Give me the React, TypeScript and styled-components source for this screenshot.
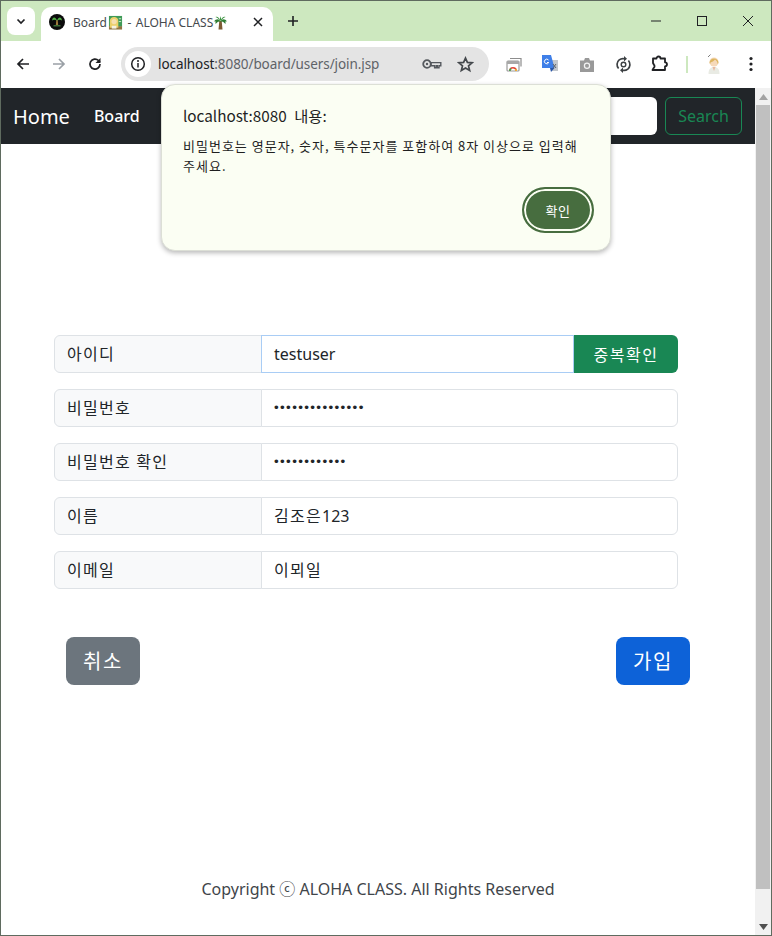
import React from "react";
import styled, { createGlobalStyle } from "styled-components";

const KR = `"Noto Sans", "Noto Sans CJK KR", sans-serif`;

const Global = createGlobalStyle`
  html, body { margin: 0; padding: 0; background: #fff; }
  * { box-sizing: border-box; }
  body { font-family: ${KR}; overflow: hidden; }
`;

const Win = styled.div`
  position: relative;
  width: 772px;
  height: 936px;
  display: flex;
  flex-direction: column;
  border: 1px solid #5f6b5f;
  overflow: hidden;
  background: #fff;
`;

/* tab strip */
const TabStrip = styled.div`
  height: 40px;
  flex: none;
  display: flex;
  align-items: flex-start;
  background: #cde8bf;
  padding: 6px 0 0 6px;
`;
const TabMenu = styled.div`
  width: 28px;
  height: 28px;
  border-radius: 8px;
  background: #fff;
  display: flex;
  align-items: center;
  justify-content: center;
  margin-right: 6px;
`;
const Tab = styled.div`
  width: 232px;
  height: 34px;
  background: #fff;
  border-radius: 10px 10px 0 0;
  display: flex;
  align-items: center;
  padding: 0 9px 4px 8px;
`;
const TabTitle = styled.span`
  display: flex;
  align-items: center;
  flex: 1;
  margin-left: 8px;
  font-family: "Noto Sans", sans-serif;
  font-size: 12px;
  color: #45494d;
  white-space: nowrap;
`;
const Dash = styled.span`
  margin: 0 4.5px;
`;
const NewTab = styled.div`
  width: 28px;
  height: 28px;
  margin-left: 6px;
  display: flex;
  align-items: center;
  justify-content: center;
`;
const WinControls = styled.div`
  margin: -6px 0 0 auto;
  display: flex;
  height: 40px;
  align-items: center;
`;
const WinBtn = styled.div`
  width: 46px;
  height: 40px;
  display: flex;
  align-items: center;
  justify-content: center;
`;

/* toolbar */
const Toolbar = styled.div`
  height: 47px;
  flex: none;
  display: flex;
  align-items: center;
  background: #fff;
  border-radius: 10px 10px 0 0;
  padding: 0 0 1px 4px;
`;
const NavBtn = styled.div`
  width: 36px;
  height: 34px;
  display: flex;
  align-items: center;
  justify-content: center;
`;
const Omnibox = styled.div`
  width: 368px;
  height: 34px;
  margin-left: 8px;
  border-radius: 17px;
  background: #e4e4e4;
  display: flex;
  align-items: center;
  padding: 0 14px 0 4px;
`;
const SiteInfo = styled.div`
  width: 26px;
  height: 26px;
  border-radius: 50%;
  background: #fff;
  display: flex;
  align-items: center;
  justify-content: center;
`;
const Url = styled.div`
  flex: 1;
  margin-left: 7px;
  font-family: "Noto Sans", sans-serif;
  font-size: 13.5px;
  color: #5f6368;
  letter-spacing: -0.08px;
  white-space: nowrap;
`;
const Host = styled.span`
  color: #202124;
`;
const OmniIcon = styled.div`
  width: 20px;
  height: 20px;
  margin-left: 13px;
  display: flex;
  align-items: center;
  justify-content: center;
`;
const Extensions = styled.div`
  display: flex;
  align-items: center;
  margin-left: 7px;
`;
const ExtIcon = styled.div`
  width: 36.4px;
  height: 24px;
  display: flex;
  align-items: center;
  justify-content: center;
`;
const ExtSep = styled.div`
  width: 2px;
  height: 17px;
  background: #cde8bf;
  margin: 0 8px 0 8px;
`;

/* viewport */
const Viewport = styled.div`
  flex: 1;
  display: flex;
  min-height: 0;
`;
const Page = styled.div`
  flex: 1;
  display: flex;
  flex-direction: column;
`;
const Navbar = styled.nav`
  height: 56px;
  flex: none;
  display: flex;
  align-items: center;
  background: #212529;
  padding: 0 13px 0 12px;
`;
const Brand = styled.span`
  color: #fff;
  font-size: 20px;
  margin-right: 24px;
`;
const NavLink = styled.span`
  color: #fff;
  font-size: 16px;
  font-weight: 500;
`;
const SearchBox = styled.div`
  margin-left: auto;
  width: 120px;
  height: 38px;
  background: #fff;
  border-radius: 6px;
`;
const SearchBtn = styled.div`
  width: 77px;
  height: 38px;
  margin-left: 8px;
  border: 1px solid #198754;
  border-radius: 6px;
  color: #198754;
  font-size: 16px;
  display: flex;
  align-items: center;
  justify-content: center;
`;
const Main = styled.main`
  flex: 1;
  display: flex;
  flex-direction: column;
  padding: 191px 0 0 53px;
`;
const Form = styled.form`
  width: 624px;
  display: flex;
  flex-direction: column;
  gap: 16px;
`;
const Group = styled.div`
  display: flex;
  height: 38px;
`;
const Label = styled.span`
  width: 208px;
  flex: none;
  padding: 0 0 2px 12px;
  display: flex;
  align-items: center;
  font-size: 16px;
  letter-spacing: 1.25px;
  color: #212529;
  background: #f8f9fa;
  border: 1px solid #dee2e6;
  border-radius: 6px 0 0 6px;
`;
const Field = styled.div<{ $focus?: boolean; $joined?: boolean; $lift?: boolean }>`
  flex: 1;
  margin-left: -1px;
  padding: 0 0 ${(p) => (p.$lift ? "2px" : "1px")} 12px;
  display: flex;
  align-items: center;
  font-size: 16px;
  color: #212529;
  background: #fff;
  border: 1px solid ${(p) => (p.$focus ? "#a9cdf5" : "#dee2e6")};
  border-radius: ${(p) => (p.$joined ? "0" : "0 6px 6px 0")};
`;
const Hangul = styled.span`
  letter-spacing: 1.3px;
`;
const Dots = styled.span`
  font-family: "Liberation Sans", sans-serif;
  font-size: 13.4px;
  letter-spacing: 1.36px;
`;
const CheckBtn = styled.button`
  width: 104px;
  flex: none;
  border: 0;
  padding: 0;
  font-family: ${KR};
  font-size: 16px;
  letter-spacing: 1.5px;
  color: #fff;
  background: #198754;
  border-radius: 0 6px 6px 0;
`;
const Actions = styled.div`
  width: 624px;
  margin: 48px 0 0 12px;
  display: flex;
  justify-content: space-between;
`;
const LgButton = styled.button<{ $color: string }>`
  height: 48px;
  width: 74px;
  border: 0;
  padding: 0 0 2px;
  font-family: ${KR};
  font-size: 20px;
  letter-spacing: 1.5px;
  color: #fff;
  background: ${(p) => p.$color};
  border-radius: 8px;
`;
const Footer = styled.footer`
  margin: 192px 0 0 -53px;
  text-align: center;
  font-size: 16px;
  line-height: 24px;
  color: #3f454a;
`;

/* scrollbar */
const Scrollbar = styled.div`
  width: 16px;
  flex: none;
  background: #f1f1f1;
  display: flex;
  flex-direction: column;
  align-items: center;
  padding: 0 1px;
`;
const ScrollArrow = styled.div`
  height: 17px;
  flex: none;
  display: flex;
  align-items: center;
  justify-content: center;
`;
const ScrollThumb = styled.div`
  width: 14px;
  flex: none;
  height: 784px;
  background: #c0c0c0;
`;
const ScrollRest = styled.div`
  flex: 1;
`;

/* alert */
const Dialog = styled.div`
  position: absolute;
  left: 160px;
  top: 83px;
  width: 450px;
  height: 167px;
  background: #fbfef3;
  border: 1px solid #dcdfd6;
  border-radius: 14px;
  box-shadow: 0 2px 5px rgba(0, 0, 0, 0.28);
  padding: 19px 21px 0;
  display: flex;
  flex-direction: column;
  font-family: "Noto Sans CJK KR", sans-serif;
`;
const DialogTitle = styled.div`
  font-size: 15.3px;
  line-height: 22px;
  word-spacing: 4px;
  color: #1f1f1f;
`;
const DialogBody = styled.div`
  margin-top: 10px;
  font-size: 13px;
  line-height: 20px;
  letter-spacing: 1px;
  word-break: keep-all;
  color: #1f1f1f;
  width: 404px;
`;
const DialogActions = styled.div`
  display: flex;
  justify-content: flex-end;
  margin: 11px -5px 0 0;
`;
const OkButton = styled.button`
  width: 72px;
  height: 46px;
  padding: 0;
  border: 2px solid #476d3f;
  border-radius: 23px;
  background: #476d3f;
  box-shadow: inset 0 0 0 2px #fbfef3;
  color: #fff;
  font-family: "Noto Sans CJK KR", sans-serif;
  font-size: 13px;
  letter-spacing: 0.5px;
`;

const Palm = () => (
  <svg width="15" height="15" viewBox="0 0 15 15" style={{ flex: "none" }}>
    <path d="M6.300 6h2.400l.8 8.500h-4z" fill="#7d5a34" />
    <path d="M7.500 6.500C6 3.500 3 3.500 1 6.500l1.500-.3L2.500 9 5 6.800zM7.500 6.500c1.500-3 4.500-3 6.500 0l-1.500-.3.000 2.800-2.500-2.200z" fill="#2f7d34" />
    <path d="M7.500 6C6.500 3 4.500 1 2.500 2l2 1zM7.500 6c1-3 3-5 5-4l-2 1zM6.500 5.500 7.500 1l1 4.500z" fill="#3c9440" />
  </svg>
);

const Teacher = () => (
  <svg width="15" height="15" viewBox="0 0 16 15" style={{ flex: "none", marginLeft: 1 }}>
    <rect x="1" y="0.500" width="14" height="11.500" fill="#3f9a58" />
    <rect x="1" y="11.500" width="14" height="3.500" fill="#8f7442" />
    <path d="M2 13V6a4.500 4.500 0 0 1 9 0v7z" fill="#ecd06a" />
    <circle cx="6.500" cy="6.500" r="2.800" fill="#f6dfb0" />
    <rect x="4" y="11" width="5" height="3" fill="#f4f1e4" />
    <rect x="11.500" y="3" width="2.500" height="1" fill="#cfe8c8" />
    <rect x="11.500" y="6" width="2.500" height="1" fill="#cfe8c8" />
  </svg>
);

const App = () => (
  <Win>
    <Global />
    <TabStrip>
      <TabMenu>
        <svg width="12" height="12" viewBox="0 0 12 12">
          <path d="M2.500 4.500 6 8l3.500-3.500" fill="none" stroke="#202124" strokeWidth="1.700" />
        </svg>
      </TabMenu>
      <Tab>
        <svg width="16" height="16" viewBox="0 0 16 16" style={{ flex: "none" }}>
          <circle cx="8" cy="8" r="8" fill="#0b0b0b" />
          <path d="M7.300 6h1.400l.5 5.500H6.800z" fill="#a07a3c" />
          <path d="M8 6.500C6.500 2.500 3.500 2.500 3 6.500c1.500-1.200 3-1 5 0zM8 6.500c1.500-4 4.500-4 5 0-1.500-1.200-3-1-5 0z" fill="#4fae45" />
          <rect x="4.500" y="11" width="7" height="1.500" fill="#3c6e38" />
        </svg>
        <TabTitle>
          Board
          <Teacher />
          <Dash>-</Dash>
          ALOHA CLASS
          <Palm />
        </TabTitle>
        <svg width="12" height="12" viewBox="0 0 12 12">
          <path d="M2 2l8 8M10 2l-8 8" stroke="#202124" strokeWidth="1.500" />
        </svg>
      </Tab>
      <NewTab>
        <svg width="14" height="14" viewBox="0 0 14 14">
          <path d="M7 2v10M2 7h10" stroke="#202124" strokeWidth="1.600" />
        </svg>
      </NewTab>
      <WinControls>
        <WinBtn>
          <svg width="12" height="12" viewBox="0 0 12 12">
            <path d="M1 6h10" stroke="#202124" strokeWidth="1" />
          </svg>
        </WinBtn>
        <WinBtn>
          <svg width="12" height="12" viewBox="0 0 12 12">
            <rect x="1.500" y="1.500" width="9" height="9" fill="none" stroke="#202124" strokeWidth="1" />
          </svg>
        </WinBtn>
        <WinBtn>
          <svg width="12" height="12" viewBox="0 0 12 12">
            <path d="M1 1l10 10M11 1L1 11" stroke="#202124" strokeWidth="1" />
          </svg>
        </WinBtn>
      </WinControls>
    </TabStrip>

    <Toolbar>
      <NavBtn>
        <svg width="16" height="16" viewBox="0 0 16 16">
          <path d="M14 8H3M8 3 3 8l5 5" fill="none" stroke="#202124" strokeWidth="1.700" />
        </svg>
      </NavBtn>
      <NavBtn>
        <svg width="16" height="16" viewBox="0 0 16 16">
          <path d="M2 8h11M8 3l5 5-5 5" fill="none" stroke="#9aa0a6" strokeWidth="1.700" />
        </svg>
      </NavBtn>
      <NavBtn>
        <svg width="16" height="16" viewBox="0 0 16 16">
          <path d="M13 8a5 5 0 1 1-1.500-3.500L13 6" fill="none" stroke="#202124" strokeWidth="1.700" />
          <path d="M13.500 2v5h-5z" fill="#202124" />
        </svg>
      </NavBtn>
      <Omnibox>
        <SiteInfo>
          <svg width="16" height="16" viewBox="0 0 16 16">
            <circle cx="8" cy="8" r="6.300" fill="none" stroke="#202124" strokeWidth="1.500" />
            <path d="M8 7v4.500" stroke="#202124" strokeWidth="1.500" />
            <circle cx="8" cy="5" r="1" fill="#202124" />
          </svg>
        </SiteInfo>
        <Url>
          <Host>localhost</Host>:8080/board/users/join.jsp
        </Url>
        <OmniIcon>
          <svg width="20" height="12" viewBox="0 0 20 12">
            <circle cx="5" cy="6" r="3.800" fill="none" stroke="#55595e" strokeWidth="1.800" />
            <circle cx="5" cy="6" r="1.200" fill="#55595e" />
            <path d="M9 4.600h9.800v3.200h-1.800v2h-1.700v-2h-1v2h-1.700v-2H9z" fill="none" stroke="#55595e" strokeWidth="1.400" />
          </svg>
        </OmniIcon>
        <OmniIcon>
          <svg width="17" height="17" viewBox="0 0 18 18">
            <path d="M9 2.200l2 4.600 5 .4-3.800 3.300 1.200 4.900L9 12.800l-4.400 2.600 1.200-4.900L2 7.200l5-.4z" fill="none" stroke="#44484c" strokeWidth="1.800" />
          </svg>
        </OmniIcon>
      </Omnibox>
      <Extensions>
        <ExtIcon>
          <svg width="16" height="15" viewBox="0 0 16 15">
            <path d="M4 1.500h11v8" fill="none" stroke="#8d8d8d" strokeWidth="1.200" />
            <rect x="1" y="4" width="12" height="10" rx="1" fill="none" stroke="#9a9a9a" strokeWidth="1.200" />
            <rect x="1" y="4" width="12" height="3" fill="#a8a8a8" />
            <path d="M3 14a4 4 0 0 1 8 0H9.500a2.500 2.500 0 0 0-5 0z" fill="#e0493a" />
            <path d="M3 14a4 4 0 0 1 1.500-3.100L5.500 12.500a2.500 2.500 0 0 0-1 1.500z" fill="#3fa652" />
            <path d="M9.500 14H11a4 4 0 0 0-.7-2.200L8.900 12.500z" fill="#f2b92e" />
          </svg>
        </ExtIcon>
        <ExtIcon>
          <svg width="17" height="18" viewBox="0 0 17 18">
            <path d="M6 5h10v11H9z" fill="#c3c7cc" />
            <path d="M0 0h9l3.500 13H0z" fill="#3f7fe8" />
            <path d="M8 13h4.500L9 17z" fill="#2a56a8" />
            <path d="M6.500 5a2.300 2.300 0 1 0 .3 2.500H5" fill="none" stroke="#fff" strokeWidth="1" />
            <path d="M11 9l3 4M14 9l-3 4" stroke="#5f6368" strokeWidth="1" />
          </svg>
        </ExtIcon>
        <ExtIcon>
          <svg width="16" height="15" viewBox="0 0 16 15">
            <path d="M1 3.500h4l1-2.500h4l1 2.500h4V15H1z" fill="#999" />
            <circle cx="8" cy="8.800" r="3.200" fill="#f2f2f2" />
            <circle cx="8" cy="8.800" r="2" fill="#999" />
          </svg>
        </ExtIcon>
        <ExtIcon>
          <svg width="17" height="17" viewBox="0 0 17 17">
            <path d="M3.600 12.500a6 6 0 0 1 .6-8.600 6 6 0 0 1 5.300-1.100" fill="none" stroke="#3c4043" strokeWidth="1.700" />
            <path d="M13.400 4.500a6 6 0 0 1-.6 8.600 6 6 0 0 1-5.300 1.100" fill="none" stroke="#3c4043" strokeWidth="1.700" />
            <path d="M9 0v5.500l3-2.700zM8 17v-5.500l-3 2.700z" fill="#3c4043" />
            <circle cx="8.500" cy="8.500" r="2.300" fill="none" stroke="#3c4043" strokeWidth="1.400" />
          </svg>
        </ExtIcon>
        <ExtIcon>
          <svg width="20" height="20" viewBox="0 0 20 20">
            <path d="M3 4.500h3.500a2 2 0 0 1 4 0H15v3.800a2 2 0 0 1 0 4V16H2.500l1.300-2.200a2.200 2.200 0 0 0 0-3.300L3 9z" fill="none" stroke="#202124" strokeWidth="1.800" strokeLinejoin="round" />
          </svg>
        </ExtIcon>
        <ExtSep />
        <ExtIcon>
          <svg width="16" height="22" viewBox="0 0 16 22">
            <path d="M2.500 21c0-5 2-7 5.500-7s5.500 2 5.500 7z" fill="#e9ebe4" />
            <path d="M6.500 14h3L8 18z" fill="#e8b9a0" />
            <circle cx="8" cy="9" r="4.500" fill="#f6d9ba" />
            <path d="M3.500 10a4.500 4.500 0 0 1 9 0l-.8 1c0-2-1.200-3-2.700-4.500C8 8 6 9 4.500 9.500L4.200 11z" fill="#dcb560" />
            <path d="M2 4l2.500-2.500" stroke="#7d7d7d" strokeWidth="1" />
          </svg>
        </ExtIcon>
        <ExtIcon>
          <svg width="4" height="16" viewBox="0 0 4 16">
            <circle cx="2" cy="2.500" r="1.600" fill="#202124" />
            <circle cx="2" cy="8" r="1.600" fill="#202124" />
            <circle cx="2" cy="13.500" r="1.600" fill="#202124" />
          </svg>
        </ExtIcon>
      </Extensions>
    </Toolbar>

    <Viewport>
      <Page>
        <Navbar>
          <Brand>Home</Brand>
          <NavLink>Board</NavLink>
          <SearchBox />
          <SearchBtn>Search</SearchBtn>
        </Navbar>
        <Main>
          <Form>
            <Group>
              <Label>아이디</Label>
              <Field $focus $joined>testuser</Field>
              <CheckBtn type="button">중복확인</CheckBtn>
            </Group>
            <Group>
              <Label>비밀번호</Label>
              <Field><Dots>•••••••••••••••</Dots></Field>
            </Group>
            <Group>
              <Label>비밀번호 확인</Label>
              <Field><Dots>••••••••••••</Dots></Field>
            </Group>
            <Group>
              <Label>이름</Label>
              <Field $lift><span><Hangul>김조은</Hangul>123</span></Field>
            </Group>
            <Group>
              <Label>이메일</Label>
              <Field $lift><Hangul>이뫼일</Hangul></Field>
            </Group>
          </Form>
          <Actions>
            <LgButton type="button" $color="#6c757d">취소</LgButton>
            <LgButton type="button" $color="#0d62d8">가입</LgButton>
          </Actions>
          <Footer>Copyright ⓒ ALOHA CLASS. All Rights Reserved</Footer>
        </Main>
      </Page>
      <Scrollbar>
        <ScrollArrow>
          <svg width="9" height="6" viewBox="0 0 9 6"><path d="M4.500 0 9 6H0z" fill="#a3a3a3" /></svg>
        </ScrollArrow>
        <ScrollThumb />
        <ScrollRest />
        <ScrollArrow>
          <svg width="9" height="6" viewBox="0 0 9 6"><path d="M0 0h9L4.500 6z" fill="#505050" /></svg>
        </ScrollArrow>
      </Scrollbar>
    </Viewport>

    <Dialog>
      <DialogTitle>localhost:8080 내용:</DialogTitle>
      <DialogBody>비밀번호는 영문자, 숫자, 특수문자를 포함하여 8자 이상으로 입력해 주세요.</DialogBody>
      <DialogActions>
        <OkButton type="button">확인</OkButton>
      </DialogActions>
    </Dialog>
  </Win>
);

export default App;
